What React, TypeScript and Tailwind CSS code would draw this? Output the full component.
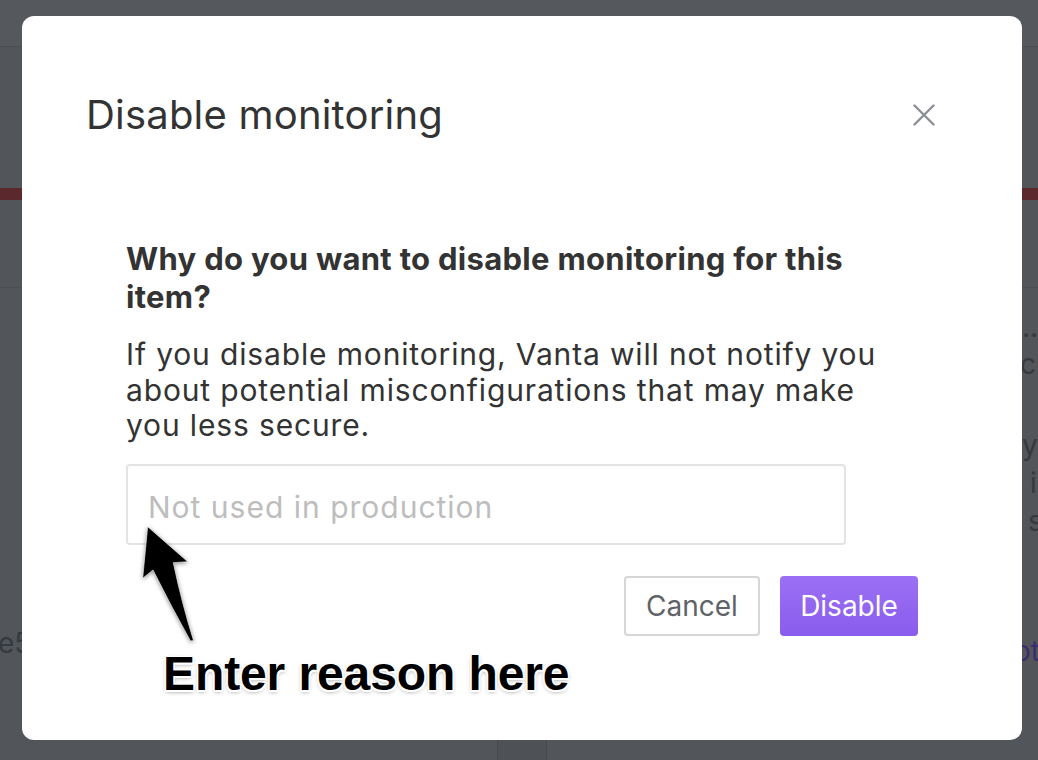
function PageBehind() {
  return (
    <div className="absolute inset-0 flex flex-col">
      <div className="h-[47px] shrink-0 border-b border-[#4b4e52] bg-[#55585c]" />
      <div className="h-[141px] shrink-0" />
      <div className="h-[12px] shrink-0 bg-[#5b282d]" />
      <div className="h-[87px] shrink-0" />
      <div className="h-[1px] shrink-0 bg-[#4b4e52]" />
      <div className="flex-1" />
      <span className="absolute left-[1022px] top-[306px] text-[28px] text-[#36393d]">...</span>
      <span className="absolute left-[1020px] top-[343px] text-[28px] text-[#36393d]">cr</span>
      <span className="absolute left-[1022px] top-[424px] text-[28px] text-[#36393d]">y</span>
      <span className="absolute left-[1030px] top-[462px] text-[28px] text-[#36393d]">i</span>
      <span className="absolute left-[1028px] top-[500px] text-[28px] text-[#36393d]">s</span>
      <span className="absolute left-[1014px] top-[630px] text-[28px] text-[#3a2d6e]">ot</span>
      <span className="absolute left-[-2px] top-[622px] text-[28px] text-[#36393d]">e5</span>
      <div className="absolute left-[497px] top-[740px] h-[20px] w-[50px] border-x border-[#45484c] bg-[#4e5155]" />
    </div>
  )
}

function Arrow() {
  return (
    <svg
      className="absolute left-[108px] top-[504px] drop-shadow-[0_1px_2px_rgba(0,0,0,0.45)]"
      width="75"
      height="130"
      viewBox="0 0 75 130"
    >
      <path
        d="M17.7 6.7 L57.7 41.7 L43.3 42.7 Q52 84 63.5 120.5 L60.5 121 Q41 86 23 50 L12.7 58.3 Z"
        fill="#000"
        stroke="#fff"
        strokeWidth="0.6"
      />
    </svg>
  )
}

export default function App() {
  return (
    <div className="relative h-[760px] w-full overflow-hidden bg-[#525559] font-['Inter',sans-serif]">
      <PageBehind />

      <div className="absolute left-[22px] top-[16px] h-[724px] w-[1000px] rounded-[12px] bg-white">
        <div className="mt-[75px] flex h-[48px] items-center justify-between pl-[64px] pr-[87px]">
          <h2 className="text-[40px] leading-[48px] font-normal tracking-[0.2px] text-[#333333]">Disable monitoring</h2>
          <button className="flex h-[22px] w-[22px] items-center justify-center text-[#8c9096]">
            <svg width="22" height="22" viewBox="0 0 22 22" fill="none" stroke="currentColor" strokeWidth="2.4" strokeLinecap="round">
              <path d="M1.5 1.5 L20.5 20.5 M20.5 1.5 L1.5 20.5" />
            </svg>
          </button>
        </div>

        <div className="mt-[101px] flex flex-col px-[104px]">
          <p className="w-[760px] text-[31px] leading-[38px] font-bold tracking-[0.3px] text-[#333333]">
            Why do you want to disable monitoring for this item?
          </p>
          <p className="mt-[21px] w-[760px] text-[30px] leading-[35.5px] tracking-[0.85px] text-[#333333]">
            If you disable monitoring, Vanta will not notify you about potential misconfigurations that may make you less secure.
          </p>
          <input
            placeholder="Not used in production"
            className="mt-[20px] h-[81px] w-[720px] rounded-[4px] border-2 border-[#e3e3e3] px-[20px] pt-[5px] text-[30px] tracking-[1px] text-[#333333] outline-none placeholder:text-[#bdbdbd]"
          />
          <div className="mt-[31px] flex justify-end gap-[20px]">
            <button className="h-[60px] w-[136px] rounded-[4px] border-2 border-[#d6d6d6] bg-white text-[28px] text-[#5f6368]">
              Cancel
            </button>
            <button className="h-[60px] w-[138px] rounded-[4px] bg-gradient-to-b from-[#9b70f4] to-[#8a5ced] text-[28px] text-white">
              Disable
            </button>
          </div>
        </div>

        <Arrow />
        <div className="absolute left-[141px] top-[634px] font-['Liberation_Sans',Arial,sans-serif] text-[48px] leading-none font-bold tracking-[-0.1px] text-black [text-shadow:-1.5px_-1.5px_0_#fff,1.5px_-1.5px_0_#fff,-1.5px_1.5px_0_#fff,1.5px_1.5px_0_#fff,0_2px_4px_rgba(0,0,0,0.4)]">
          Enter reason here
        </div>
      </div>
    </div>
  )
}
